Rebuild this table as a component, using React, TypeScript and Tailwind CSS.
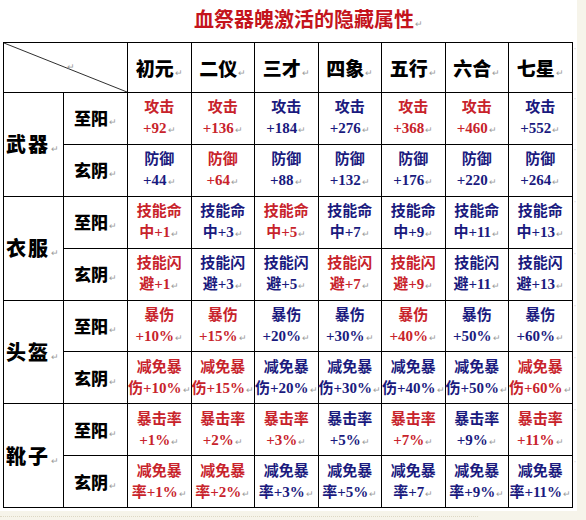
import React from "react";

const R = "text-[#c8232b]";
const B = "text-[#1a1a7e]";

const cols = ["初元", "二仪", "三才", "四象", "五行", "六合", "七星"];

type Row = {
  sub: string;
  first: string; // first line text
  rest: string; // text before the value on the 2nd line
  values: string[];
  colors: ("r" | "b")[];
};

const groups: { name: string; rows: Row[] }[] = [
  {
    name: "武器",
    rows: [
      {
        sub: "至阳",
        first: "攻击",
        rest: "",
        values: ["+92", "+136", "+184", "+276", "+368", "+460", "+552"],
        colors: ["r", "r", "b", "b", "r", "r", "b"],
      },
      {
        sub: "玄阴",
        first: "防御",
        rest: "",
        values: ["+44", "+64", "+88", "+132", "+176", "+220", "+264"],
        colors: ["b", "r", "b", "b", "b", "b", "b"],
      },
    ],
  },
  {
    name: "衣服",
    rows: [
      {
        sub: "至阳",
        first: "技能命",
        rest: "中",
        values: ["+1", "+3", "+5", "+7", "+9", "+11", "+13"],
        colors: ["r", "b", "r", "b", "b", "b", "b"],
      },
      {
        sub: "玄阴",
        first: "技能闪",
        rest: "避",
        values: ["+1", "+3", "+5", "+7", "+9", "+11", "+13"],
        colors: ["r", "b", "b", "r", "r", "b", "b"],
      },
    ],
  },
  {
    name: "头盔",
    rows: [
      {
        sub: "至阳",
        first: "暴伤",
        rest: "",
        values: ["+10%", "+15%", "+20%", "+30%", "+40%", "+50%", "+60%"],
        colors: ["r", "r", "b", "b", "r", "b", "b"],
      },
      {
        sub: "玄阴",
        first: "减免暴",
        rest: "伤",
        values: ["+10%", "+15%", "+20%", "+30%", "+40%", "+50%", "+60%"],
        colors: ["r", "r", "b", "b", "b", "b", "r"],
      },
    ],
  },
  {
    name: "靴子",
    rows: [
      {
        sub: "至阳",
        first: "暴击率",
        rest: "",
        values: ["+1%", "+2%", "+3%", "+5%", "+7%", "+9%", "+11%"],
        colors: ["r", "r", "r", "b", "r", "b", "r"],
      },
      {
        sub: "玄阴",
        first: "减免暴",
        rest: "率",
        values: ["+1%", "+2%", "+3%", "+5%", "+7", "+9%", "+11%"],
        colors: ["r", "r", "b", "b", "b", "b", "b"],
      },
    ],
  },
];

function Mark({ className = "" }: { className?: string }) {
  return (
    <span className={`text-[9px] leading-none font-normal text-[#9a9a9a] ml-[1px] ${className}`}>↵</span>
  );
}

function RowEnd() {
  return (
    <td className="w-[6px] p-0 align-top border-0">
      <span className="block pl-[1px] pt-[4px] text-[9px] leading-none text-[#b0b0b0]">ˈ</span>
    </td>
  );
}

export default function App() {
  const cell = "border border-black p-0";
  return (
    <div
      className="w-[586px] h-[520px] bg-[#f6f4ea] overflow-hidden"
      style={{ fontFamily: '"Liberation Serif", "Noto Sans CJK SC", serif' }}
    >
      <div className="w-[577px] h-[511px] bg-white pt-[4px]">
        {/* Title */}
        <div className="h-[32px] pl-[40px] text-center text-[20px] leading-[32px] font-bold text-[#c4141c]">
          血祭器魄激活的隐藏属性
          <Mark />
        </div>

        <table className="ml-[3px] mt-[6px] border-collapse table-fixed w-[575px]">
          <colgroup>
            <col className="w-[60px]" />
            <col className="w-[64px]" />
            {cols.map((c) => (
              <col key={c} className="w-[63.5px]" />
            ))}
            <col className="w-[6px]" />
          </colgroup>
          <tbody>
            <tr className="h-[50px]">
              <td colSpan={2} className={`${cell} relative`}>
                <svg className="absolute inset-0 w-full h-full" preserveAspectRatio="none" viewBox="0 0 124 51">
                  <line x1="0" y1="0" x2="124" y2="51" stroke="#111" strokeWidth="0.9" />
                </svg>
                <span className="absolute left-[63px] top-[18px] text-[9px] text-[#9a9a9a]">↵</span>
              </td>
              {cols.map((c) => (
                <td
                  key={c}
                  className={`${cell} text-center text-[19px] leading-[24px] font-bold text-black`}
                  style={{ fontFamily: '"Noto Sans CJK SC", sans-serif' }}
                >
                  <span className="font-black">{c}</span>
                  <Mark />
                </td>
              ))}
              <RowEnd />
            </tr>

            {groups.map((g) =>
              g.rows.map((row, ri) => (
                <tr key={g.name + row.sub} className="h-[51.9px]">
                  {ri === 0 && (
                    <td
                      rowSpan={2}
                      className={`${cell} text-center text-[20px] leading-[24px] font-bold text-black tracking-[2px]`}
                      style={{ fontFamily: '"Noto Sans CJK SC", sans-serif' }}
                    >
                      <span className="font-black">{g.name}</span>
                      <Mark />
                    </td>
                  )}
                  <td
                    className={`${cell} text-center text-[17px] leading-[22px] font-bold text-black`}
                    style={{ fontFamily: '"Noto Sans CJK SC", sans-serif' }}
                  >
                    <span className="font-black">{row.sub}</span>
                    <Mark />
                  </td>
                  {row.values.map((v, i) => (
                    <td
                      key={i}
                      className={`${cell} text-center font-bold text-[15px] leading-[21px] ${
                        row.colors[i] === "r" ? R : B
                      }`}
                    >
                      <div className="whitespace-nowrap">{row.first}</div>
                      <div className="whitespace-nowrap">
                        {row.rest}
                        {v}
                        <Mark />
                      </div>
                    </td>
                  ))}
                  <RowEnd />
                </tr>
              ))
            )}
          </tbody>
        </table>
      </div>
      <div className="mt-[5px] w-[478px] border-t border-dotted border-[#ddd8c4]" />
    </div>
  );
}
